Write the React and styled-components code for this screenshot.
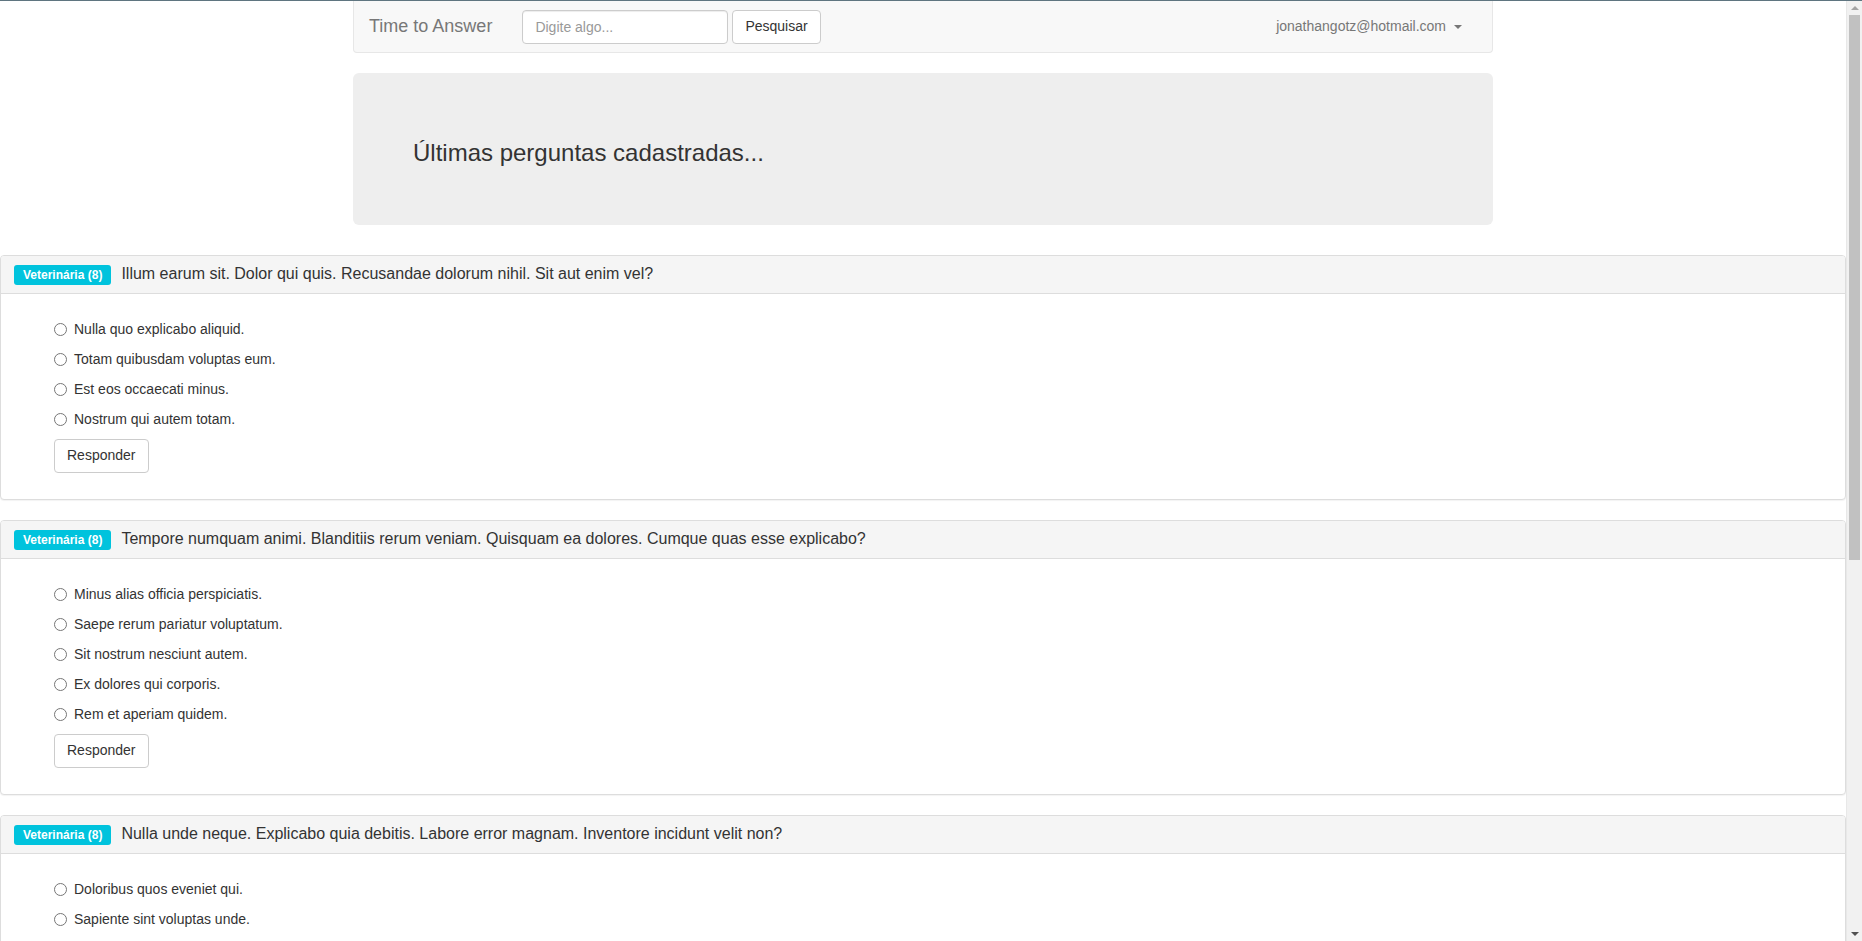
import React from 'react';
import styled, { createGlobalStyle } from 'styled-components';

const questions = [
  {
    title: 'Illum earum sit. Dolor qui quis. Recusandae dolorum nihil. Sit aut enim vel?',
    options: ['Nulla quo explicabo aliquid.', 'Totam quibusdam voluptas eum.', 'Est eos occaecati minus.', 'Nostrum qui autem totam.'],
  },
  {
    title: 'Tempore numquam animi. Blanditiis rerum veniam. Quisquam ea dolores. Cumque quas esse explicabo?',
    options: ['Minus alias officia perspiciatis.', 'Saepe rerum pariatur voluptatum.', 'Sit nostrum nesciunt autem.', 'Ex dolores qui corporis.', 'Rem et aperiam quidem.'],
  },
  {
    title: 'Nulla unde neque. Explicabo quia debitis. Labore error magnam. Inventore incidunt velit non?',
    options: ['Doloribus quos eveniet qui.', 'Sapiente sint voluptas unde.', 'Aut dolorem rerum ut.', 'Quia vero odit sunt.'],
  },
  {
    title: 'Voluptatem ut sed. Eius est harum. Ratione nobis ut. Quae molestiae aut omnis?',
    options: ['Velit sit quia saepe.', 'Molestias error et rem.', 'Dolores et ut vitae.'],
  },
];

const Global = createGlobalStyle`
  html {
    overflow-y: scroll;
  }
  html, body {
    margin: 0;
    padding: 0;
  }
  body {
    font-family: "Liberation Sans", Arial, sans-serif;
    font-size: 14px;
    line-height: 1.42857;
    color: #333;
    background: #fff;
    border-top: 1px solid #5f7580;
  }
  * { box-sizing: border-box; }
`;

// stands in for the browser's scrollbar gutter seen in the screenshot
const Page = styled.div`
  display: flex;
  min-height: 940px;
`;

const Main = styled.main`
  flex: 1;
  min-width: 0;
`;

const ScrollTrack = styled.aside`
  flex: 0 0 15px;
  position: sticky;
  top: 0;
  height: 940px;
  background: #f1f1f1;
  border-left: 1px solid #e8e8e8;
  display: flex;
  flex-direction: column;
  align-items: center;
  padding: 2px 2px;
  gap: 2px;
`;

const Arrow = styled.span`
  width: 0;
  height: 0;
  border-left: 4px solid transparent;
  border-right: 4px solid transparent;
  ${({ $down }) => ($down ? 'border-top: 4px solid #505050;' : 'border-bottom: 4px solid #a3a3a3;')}
  margin: 3px 0;
`;

const Thumb = styled.span`
  width: 11px;
  height: 545px;
  background: #c1c1c1;
`;

const Spacer = styled.span`
  flex: 1;
`;

const Container = styled.div`
  width: 1170px;
  padding: 0 15px;
  margin: 0 auto;
`;

const Navbar = styled.nav`
  display: flex;
  align-items: center;
  height: 52px;
  padding: 1px 15px 0;
  background: #f8f8f8;
  border: 1px solid #e7e7e7;
  border-top: none;
  border-radius: 0 0 4px 4px;
  margin-bottom: 20px;
`;

const Brand = styled.span`
  font-size: 18px;
  color: #777;
  margin-right: 30px;
`;

const SearchForm = styled.form`
  display: flex;
  gap: 4px;
`;

const Input = styled.input`
  width: 206px;
  height: 34px;
  padding: 6px 12px;
  font: inherit;
  font-size: 14px;
  border: 1px solid #ccc;
  border-radius: 4px;
  box-shadow: inset 0 1px 1px rgba(0, 0, 0, .075);
  &::placeholder { color: #999; }
`;

const Button = styled.button`
  height: 34px;
  padding: 6px 12px;
  font: inherit;
  font-size: 14px;
  color: #333;
  background: #fff;
  border: 1px solid #ccc;
  border-radius: 4px;
`;

const User = styled.span`
  margin-left: auto;
  margin-right: 15px;
  color: #777;
  display: flex;
  align-items: center;
  gap: 8px;
`;

const Caret = styled.span`
  width: 0;
  height: 0;
  border-top: 4px solid #777;
  border-left: 4px solid transparent;
  border-right: 4px solid transparent;
`;

const Jumbotron = styled.div`
  background: #eee;
  border-radius: 6px;
  padding: 47px 60px 49px;
  margin-bottom: 30px;
  h3 {
    margin: 20px 0 10px;
    font-size: 24px;
    font-weight: 500;
    line-height: 1.1;
  }
`;

const Panel = styled.div`
  border: 1px solid #ddd;
  border-radius: 4px;
  margin: 0 0 20px 0;
  box-shadow: 0 1px 1px rgba(0, 0, 0, .05);
  background: #fff;
`;

const PanelHeading = styled.div`
  display: flex;
  align-items: center;
  gap: 10px;
  padding: 7px 15px 8px 13px;
  background: #f5f5f5;
  border-bottom: 1px solid #ddd;
  border-radius: 3px 3px 0 0;
  font-size: 16px;
  line-height: 22px;
`;

const Label = styled.span`
  display: inline-block;
  background: #00c3dd;
  color: #fff;
  font-size: 12px;
  font-weight: bold;
  line-height: 1;
  padding: 4px 9px;
  border-radius: 3px;
  margin-top: 2px;
`;

const PanelBody = styled.div`
  padding: 15px 15px 16px 53px;
`;

const Radio = styled.label`
  display: flex;
  align-items: center;
  gap: 7px;
  margin: 10px 0;
  line-height: 20px;
  input {
    margin: 0;
    width: 13px;
    height: 13px;
  }
`;

const Submit = styled(Button)`
  margin-bottom: 10px;
`;

export default function App() {
  return (
    <>
      <Global />
      <Page>
        <Main>
          <Container>
            <Navbar>
              <Brand>Time to Answer</Brand>
              <SearchForm onSubmit={(e) => e.preventDefault()}>
                <Input placeholder="Digite algo..." />
                <Button type="submit">Pesquisar</Button>
              </SearchForm>
              <User>jonathangotz@hotmail.com <Caret /></User>
            </Navbar>
            <Jumbotron>
              <h3>Últimas perguntas cadastradas...</h3>
            </Jumbotron>
          </Container>
          {questions.map((q, i) => (
            <Panel key={i}>
              <PanelHeading>
                <Label>Veterinária (8)</Label>
                <span>{q.title}</span>
              </PanelHeading>
              <PanelBody>
                {q.options.map((o) => (
                  <Radio key={o}>
                    <input type="radio" name={`q${i}`} />
                    {o}
                  </Radio>
                ))}
                <Submit>Responder</Submit>
              </PanelBody>
            </Panel>
          ))}
        </Main>
        <ScrollTrack>
          <Arrow />
          <Thumb />
          <Spacer />
          <Arrow $down />
        </ScrollTrack>
      </Page>
    </>
  );
}
